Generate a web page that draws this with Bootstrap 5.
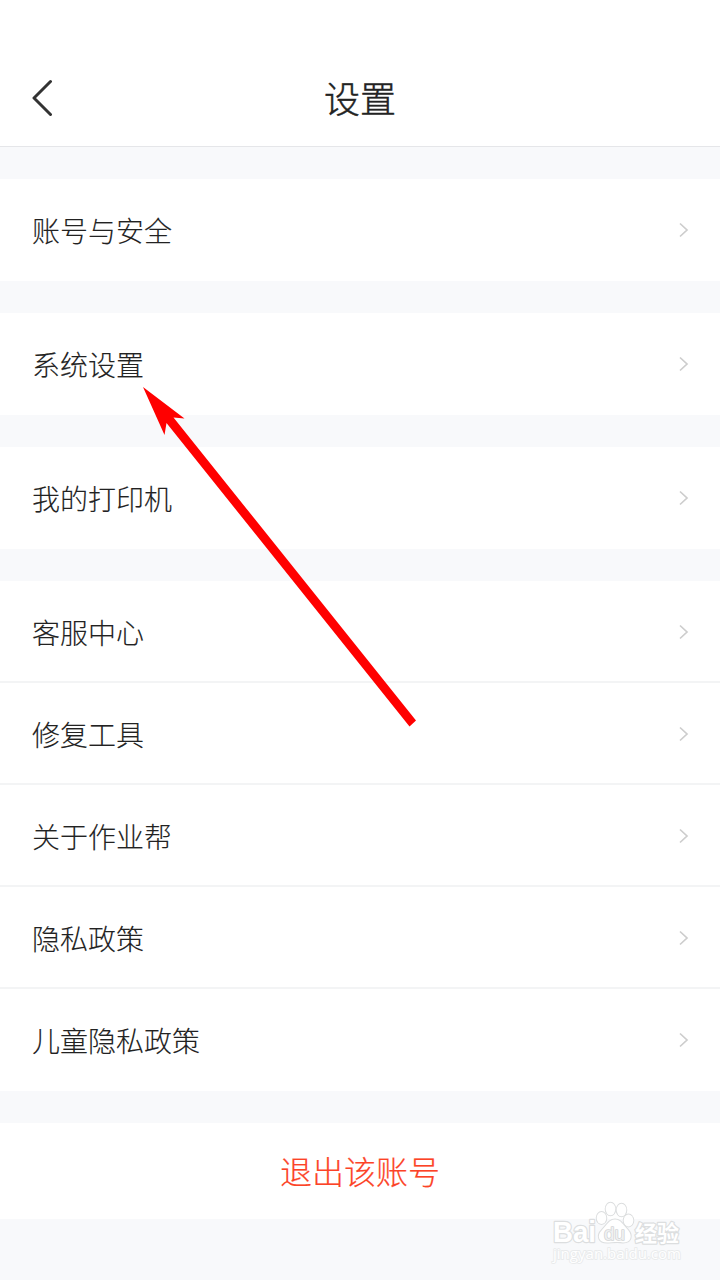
<!DOCTYPE html>
<html lang="zh-CN">
<head>
  <meta charset="UTF-8" />
  <meta name="viewport" content="width=device-width, initial-scale=1.0" />
  <title>设置</title>
  <link href="https://cdn.jsdelivr.net/npm/bootstrap@5.3.0/dist/css/bootstrap.min.css" rel="stylesheet">
  <style>
    body {
      background: #f8f9fb;
      color: #222;
      font-family: "Noto Sans CJK SC", sans-serif;
      font-weight: 300;
      height: 1280px;
      overflow: hidden;
    }

    .top-bar {
      height: 147px;
      padding: 48px 32px 0;
      border-bottom: 1px solid #e5e6e9;
    }

    .top-bar h1 {
      font-size: 36px;
      font-weight: 300;
      line-height: 54px;
      -webkit-text-stroke: 0.45px #222;
    }

    .back-btn, .bar-end {
      width: 40px;
    }

    .back-btn {
      padding-top: 2px;
    }

    .settings {
      gap: 32px;
      padding-top: 32px;
    }

    .settings .list-group {
      --bs-list-group-border-width: 0;
      --bs-list-group-color: #222;
    }

    .settings .list-group-item {
      height: 102px;
      padding: 0 31px 0 32px;
      font-size: 28px;
    }

    .settings .list-group-item span {
      -webkit-text-stroke: 0.12px #222;
    }

    .settings .list-group-item:not(:last-child) {
      padding-top: 2px;
      border-bottom: 2px solid #f3f4f5;
    }

    .logout {
      height: 96px;
      padding: 0 0 2px;
      color: #fc4327;
      font-size: 32px;
      font-weight: 300;
      -webkit-text-stroke: 0.2px #fc4327;
    }

    .pointer {
      left: 0;
      top: 0;
      pointer-events: none;
    }
  </style>
</head>
<body class="position-relative">
  <header class="top-bar bg-white d-flex align-items-center justify-content-between">
    <a href="#" class="back-btn d-flex">
      <svg width="22" height="38" viewBox="0 0 22 38" fill="none" stroke="#333" stroke-width="3" stroke-linecap="round" stroke-linejoin="round"><path d="M18.500 2.500L2 19L18.500 35.500"/></svg>
    </a>
    <h1 class="m-0">设置</h1>
    <div class="bar-end"></div>
  </header>

  <main class="settings d-flex flex-column" id="settings"></main>

  <!-- seta vermelha -->
  <svg class="pointer position-absolute" width="720" height="1280" viewBox="0 0 720 1280">
    <path fill="#f00" d="M143 387L184.500 418.500L173.500 417.500L416 720.500L409.500 726.500L166.500 423L164.500 435Z"/>
  </svg>

  <!-- marca d'água -->
  <svg class="pointer position-absolute" width="720" height="1280" viewBox="0 0 720 1280" fill="#fff" stroke="#dcdedf" stroke-width="2.400" stroke-linejoin="round" paint-order="stroke" font-weight="700">
    <text x="553" y="1242" font-family="Liberation Sans, sans-serif" font-size="29" textLength="43" lengthAdjust="spacingAndGlyphs">Bai</text>
    <g stroke-width="2">
      <ellipse cx="601.500" cy="1218" rx="4.800" ry="6"/>
      <ellipse cx="610.500" cy="1209" rx="4.800" ry="6.300"/>
      <ellipse cx="621.500" cy="1210" rx="4.800" ry="6.300"/>
      <ellipse cx="628.500" cy="1220.500" rx="4.800" ry="6"/>
      <path d="M615 1219.500C609 1219.500 607 1225 602 1230C596 1236 599 1242.500 607 1242.500C611 1242.500 618 1241.500 623 1242.500C631 1242.500 633 1236 628 1230C623 1225 621 1219.500 615 1219.500Z"/>
    </g>
    <text x="604" y="1239.500" font-family="Liberation Sans, sans-serif" font-size="19" font-weight="400" textLength="21" lengthAdjust="spacingAndGlyphs" fill="#f0f1f2" stroke="#d3d5d6" stroke-width="1.600">du</text>
    <text x="635" y="1240.500" font-family="Noto Sans CJK SC" font-size="22" textLength="44">经验</text>
    <text x="553" y="1259" font-family="Open Sans, sans-serif" font-size="14.500" font-weight="400" textLength="128" lengthAdjust="spacingAndGlyphs" stroke="#e9ebec" stroke-width="1.800">jingyan.baidu.com</text>
  </svg>

  <script src="https://cdn.jsdelivr.net/npm/bootstrap@5.3.0/dist/js/bootstrap.bundle.min.js"></script>
  <script>
    const grupos = [
      ["账号与安全"],
      ["系统设置"],
      ["我的打印机"],
      ["客服中心", "修复工具", "关于作业帮", "隐私政策", "儿童隐私政策"]
    ];

    const seta = '<svg width="10" height="16" viewBox="0 0 10 16" fill="none" stroke="#cdcdcd" stroke-width="1.700"><path d="M1 1.500L8 8L1 14.500"/></svg>';
    const settings = document.getElementById("settings");

    grupos.forEach(itens => {
      const lista = document.createElement("div");
      lista.className = "list-group list-group-flush";
      itens.forEach(item => {
        lista.innerHTML += `<a href="#" class="list-group-item d-flex align-items-center justify-content-between"><span>${item}</span>${seta}</a>`;
      });
      settings.appendChild(lista);
    });

    const sair = document.createElement("button");
    sair.className = "logout btn bg-white border-0 rounded-0 w-100";
    sair.textContent = "退出该账号";
    settings.appendChild(sair);
  </script>
</body>
</html>
